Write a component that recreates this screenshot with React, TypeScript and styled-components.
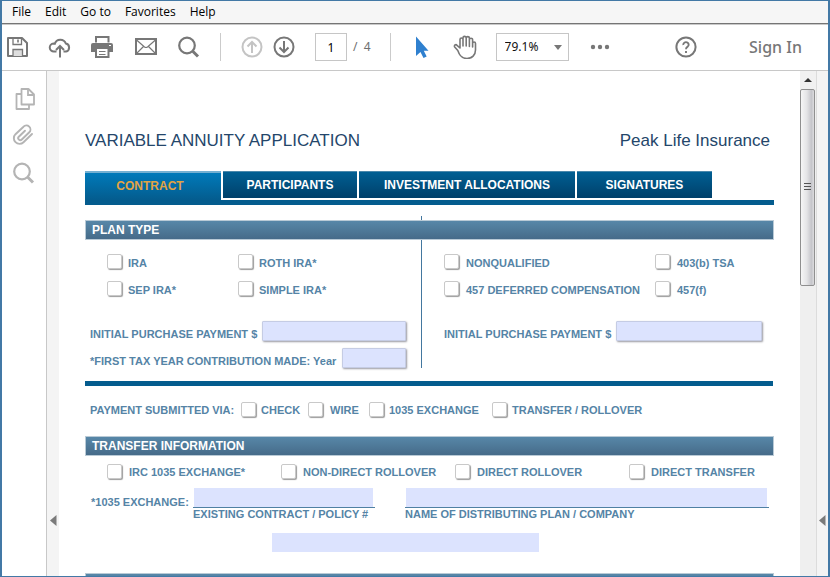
import React, { useState } from "react";
import styled, { createGlobalStyle, css } from "styled-components";

const GlobalStyle = createGlobalStyle`
  *, *::before, *::after { box-sizing: border-box; }
  body { margin: 0; background: #fff; font-family: "Liberation Sans", Arial, sans-serif; }
  button, input, select { font: inherit; color: inherit; margin: 0; }
`;

const uiFont = `"Open Sans", "Noto Sans", sans-serif`;

const Window = styled.div`
  display: flex;
  flex-direction: column;
  height: 100vh;
  overflow: hidden;
  border: solid #4379a6;
  border-width: 1px 2px;
  background: #fff;
`;

const MenuBar = styled.nav`
  display: flex;
  gap: 14px;
  height: 23px;
  flex: none;
  padding-left: 10px;
  background: #f6f6f6;
  border-bottom: 1px solid #757575;
  box-shadow: 0 1px 0 #c9c9c9;
`;

const MenuItem = styled.button`
  border: 0;
  padding: 0 0 1px;
  background: none;
  color: #000;
  font: 12px/20px ${uiFont};
`;

const Toolbar = styled.div`
  display: flex;
  align-items: center;
  gap: 19px;
  height: 47px;
  flex: none;
  padding: 0 26px 0 3px;
  border-bottom: 1px solid #c8c8c8;
  font: 12px/20px "Noto Sans", sans-serif;
  color: #6f6f6f;
`;

const Group = styled.div<{ $gap: number }>`
  display: flex;
  align-items: center;
  gap: ${(p) => p.$gap}px;
`;

const Divider = styled.span`
  width: 1px;
  height: 28px;
  background: #cbcbcb;
`;

const IconButton = styled.button<{ $tone?: string }>`
  display: flex;
  align-items: center;
  justify-content: center;
  width: 24px;
  height: 24px;
  flex: none;
  padding: 0;
  border: 0;
  background: none;
  color: ${(p) => p.$tone ?? "#777"};
`;

const PageInput = styled.input`
  width: 32px;
  height: 28px;
  padding: 0;
  border: 1px solid #c6c6c6;
  background: #fff;
  color: #000;
  text-align: center;
`;

const ZoomBox = styled.div`
  display: grid;
  align-items: center;
  width: 73px;
  height: 28px;
  color: #111;

  & > * { grid-area: 1 / 1; }
  svg { justify-self: end; margin-right: 7px; pointer-events: none; }
`;

const ZoomSelect = styled.select`
  appearance: none;
  width: 100%;
  height: 100%;
  padding: 0 8px;
  border: 1px solid #c6c6c6;
  border-radius: 0;
  background: #fff;
`;

const Account = styled.div`
  display: flex;
  align-items: center;
  gap: 51px;
  margin-left: auto;
`;

const SignIn = styled.button`
  padding: 0;
  border: 0;
  background: none;
  color: #777;
  font: 500 16px/24px "Noto Sans", sans-serif;
`;

const Body = styled.div`
  display: flex;
  flex: 1;
  min-height: 0;
`;

const Rail = styled.aside`
  display: flex;
  flex-direction: column;
  align-items: center;
  gap: 13px;
  width: 45px;
  flex: none;
  padding-top: 16px;
  border-right: 1px solid #c8c8c8;
`;

const Gutter = styled.div<{ $ruled?: boolean }>`
  display: flex;
  align-items: flex-end;
  justify-content: center;
  width: 12px;
  flex: none;
  padding-bottom: 50px;
  background: #f4f4f4;
  ${(p) => p.$ruled && css`border-left: 1px solid #dcdcdc;`}
`;

const GutterButton = styled.button`
  display: flex;
  padding: 0;
  border: 0;
  background: none;
`;

const Scrollbar = styled.div`
  display: flex;
  flex-direction: column;
  width: 16px;
  flex: none;
  background: #efefef;
`;

const ScrollUp = styled.button`
  display: flex;
  align-items: center;
  justify-content: center;
  height: 18px;
  padding: 0;
  border: 0;
  background: #f1f1f1;
`;

const Thumb = styled.div`
  display: flex;
  align-items: center;
  justify-content: center;
  height: 39%;
  margin-right: 1px;
  border: 1px solid #8f8f8f;
  border-radius: 2px;
  background: linear-gradient(90deg, #f6f6f6, #e4e4e6 45%, #c5c5ca 80%, #dcdcde);
`;

const Page = styled.main`
  flex: 1;
  min-width: 0;
  overflow: hidden;
  padding: 60px 26px 0;
  background: #fff;
`;

const Titles = styled.header`
  display: flex;
  justify-content: space-between;
  padding-right: 4px;
  color: #24466a;
  font-size: 17px;
  line-height: 20px;
`;

const Title = styled.h1`
  margin: 0;
  font: inherit;
`;

const Tabs = styled.div`
  display: flex;
  align-items: flex-start;
  gap: 2px;
  height: 34px;
  margin-top: 20px;
  border-bottom: 5px solid #045c8e;
`;

const Tab = styled.button<{ $basis: number; $active?: boolean }>`
  flex: 0 1 ${(p) => p.$basis}px;
  height: 27px;
  padding: 0;
  border: 0;
  border-top: 1px solid #4a88ab;
  background: linear-gradient(#005f93, #00406a);
  color: #fff;
  font-size: 12px;
  line-height: 24px;
  font-weight: bold;
  white-space: nowrap;
  ${(p) =>
    p.$active &&
    css`
      height: 29px;
      padding: 0 6px 2px 0;
      border-top: 2px solid #74b0d2;
      background: linear-gradient(#007aba, #045c8e);
      color: #e2a443;
    `}
`;

const SectionHead = styled.h2`
  position: relative;
  z-index: 1;
  height: 20px;
  margin: 0;
  padding-left: 6px;
  border: 1px solid #b9cad6;
  background: linear-gradient(#5787a8, #466b89);
  color: #fff;
  font-size: 12px;
  line-height: 18px;
`;

const Section = styled.section<{ $top: number }>`
  margin-top: ${(p) => p.$top}px;
  color: #5584a6;
  font-size: 11px;
  line-height: 14px;
  font-weight: bold;
`;

const Columns = styled.div`
  display: grid;
  grid-template-columns: minmax(0, 336fr) minmax(0, 353fr);
`;

const Column = styled.div<{ $ruled?: boolean }>`
  position: relative;
  padding: 9px 15px 0 5px;

  ${(p) =>
    p.$ruled &&
    css`
      padding: 9px 12px 0 23px;
      /* The rule starts just above the section bar and passes beneath it. */
      &::before {
        content: "";
        position: absolute;
        left: 0;
        top: -24px;
        bottom: 4px;
        width: 1px;
        background: #43779f;
      }
    `}
`;

const ChoiceRow = styled.div<{ $columns: string; $height: number; $indent?: number }>`
  display: grid;
  grid-template-columns: ${(p) => p.$columns};
  align-items: center;
  height: ${(p) => p.$height}px;
  padding-left: ${(p) => p.$indent ?? 0}px;
  white-space: nowrap;
`;

const ChoiceLabel = styled.label<{ $gap: number }>`
  display: flex;
  align-items: center;
  gap: ${(p) => p.$gap}px;
`;

const Box = styled.input`
  appearance: none;
  width: 15px;
  height: 15px;
  flex: none;
  margin-bottom: 2px;
  border: 1px solid #c9c9c9;
  border-radius: 2px;
  background: #fff;
  box-shadow: 1px 1px 1px #9c9c9c;

  &:checked { background: #5584a6; }
`;

const FieldRow = styled.div<{ $spaced?: boolean }>`
  display: flex;
  align-items: center;
  justify-content: space-between;
  gap: 5px;
  height: 27px;
  margin-top: ${(p) => (p.$spaced ? 15 : 0)}px;
  white-space: nowrap;

  label { padding-top: 4px; }
`;

const Field = styled.input<{ $width?: number }>`
  height: 20px;
  min-width: 0;
  margin-bottom: 2px;
  ${(p) => (p.$width ? css`width: ${p.$width}px;` : css`flex: 1;`)}
  border: 1px solid #c5cce4;
  border-radius: 1px;
  background: #dce3fe;
  box-shadow: 1px 1px 2px #9a9aa2;
`;

const Rule = styled.hr`
  height: 5px;
  margin: 9px 1px 0 0;
  border: 0;
  background: #045c8e;
`;

const Lines = styled.div`
  display: grid;
  grid-template-columns: 102px minmax(0, 1fr);
  padding: 0 5px 0 6px;
  margin-bottom: 12px;
`;

const LineLabel = styled.span`
  padding-top: 7px;
`;

const LinePair = styled.div`
  display: grid;
  grid-template-columns: minmax(0, 182fr) minmax(0, 364fr);
  column-gap: 30px;
`;

const LineCell = styled.div`
  display: flex;
  flex-direction: column;
`;

const LineInput = styled.input`
  height: 19px;
  min-width: 0;
  margin: 0 2px 0 1px;
  border: 0;
  background: #dce3fe;
`;

const Caption = styled.label`
  border-top: 1px solid #4f80a3;
  line-height: 13px;
  white-space: nowrap;
`;

const SpareLine = styled.div`
  display: grid;
  grid-template-columns: 186fr 270fr 233fr;
  margin-bottom: 21px;

  input { grid-column: 2; }
`;

const Svg = ({ children, sw = 2 }: { children: React.ReactNode; sw?: number }) => (
  <svg width="24" height="24" viewBox="0 0 24 24" fill="none" stroke="currentColor" strokeWidth={sw} aria-hidden="true">
    {children}
  </svg>
);

const SaveIcon = () => (
  <Svg>
    <path d="M3 3h14l5 5v13H3z" strokeLinejoin="round" />
    <path d="M8 3v6.500h8.500V3" strokeWidth="1.300" />
    <path d="M13 4.500v3" strokeWidth="1.600" />
    <path d="M8 21v-6.500h9.500V21" fill="#dedede" strokeWidth="1.300" />
  </Svg>
);
const CloudIcon = () => (
  <Svg>
    <path d="M8.500 16.500H6a4 4 0 0 1-.500-8q.500 0 1.300.200A5.800 5.800 0 0 1 17.800 8.500 4.100 4.100 0 0 1 18 16.500h-2.500" />
    <path d="M12 22.500V11.500M8 15l4-4 4 4" />
  </Svg>
);
const PrintIcon = () => (
  <Svg>
    <path d="M5 7.500V2h12.500v5.500" />
    <path d="M2 8h18a2 2 0 0 1 2 2v7H0v-7a2 2 0 0 1 2-2z" fill="currentColor" stroke="none" />
    <path d="M5 13h12.500v9H5z" fill="#fff" />
    <path d="M8 16.500h6.500M8 19.500h6.500" strokeWidth="1" />
    <path d="M18 10.500h2" stroke="#fff" strokeWidth="1" />
  </Svg>
);
const MailIcon = () => (
  <Svg>
    <path d="M2 4h20v15H2z" />
    <path d="M2 4.500l8.500 7.500q1.500 1 3 0L22 4.500M2.500 18.500l7-7M21.500 18.500l-7-7" strokeWidth="1.200" />
  </Svg>
);
const SearchIcon = () => (
  <Svg sw={2.2}>
    <circle cx="10" cy="10.500" r="7.800" />
    <path d="M15.500 16l5.500 5.500" strokeWidth="3" />
  </Svg>
);
const CircleArrow = ({ down }: { down?: boolean }) => (
  <Svg>
    <circle cx="12" cy="12" r="9.500" />
    {down ? <path d="M12 6v11M7.500 12.500L12 17l4.500-4.500" /> : <path d="M12 18V7M7.500 11.500L12 7l4.500 4.500" />}
  </Svg>
);
const CursorIcon = () => (
  <Svg>
    <path d="M6 1.500v19.500l4.500-4 3 6 3.200-1.500-2.900-5.700H18.500z" fill="currentColor" stroke="none" />
  </Svg>
);
const HandIcon = () => (
  <Svg sw={1.6}>
    <path
      d="M4.800 15.500L1.700 12a1.400 1.400 0 0 1 2.300-1.700L7 13V4.500a1.500 1.500 0 0 1 3 0V11V3a1.500 1.500 0 0 1 3.200 0V11V3.200a1.500 1.500 0 0 1 3.200 0V11.500V4.800a1.500 1.500 0 0 1 3.200 0V12V8.500a1.400 1.400 0 0 1 2.900 0V15c0 5-3.500 8.500-8.500 8.500-5.500 0-7.500-3-9.200-8z"
      strokeLinejoin="round"
    />
  </Svg>
);
const DotsIcon = () => (
  <Svg>
    <g fill="currentColor" stroke="none">
      <circle cx="5" cy="12" r="2.200" />
      <circle cx="12" cy="12" r="2.200" />
      <circle cx="19" cy="12" r="2.200" />
    </g>
  </Svg>
);
const HelpIcon = () => (
  <Svg>
    <circle cx="12" cy="12" r="9.600" />
    <path d="M9.300 10a2.700 2.500 0 1 1 4.400 1.600q-1.700 1-1.700 2.600M12 16v2" strokeWidth="1.900" />
  </Svg>
);
const PagesIcon = () => (
  <Svg sw={1.8}>
    <path d="M9.500 2h7l5.500 5.500v10H9.500z" strokeLinejoin="round" />
    <path d="M16 2.500V8h5.500" />
    <path d="M9 7H4.500v15H17v-4.500" strokeLinejoin="round" />
  </Svg>
);
const ClipIcon = () => (
  <Svg sw={1.9}>
    <path
      d="M20 10l-8.500 8.200a5.600 5.600 0 0 1-8-8l8-7.500a4 4 0 0 1 5.800 5.600l-7.500 7.200a2 2 0 0 1-3-2.800l6.200-6"
      strokeLinecap="round"
    />
  </Svg>
);
const LeftTriangle = () => (
  <svg width="7" height="11" viewBox="0 0 7 11" aria-hidden="true">
    <path d="M6.500 0v11L0 5.500z" fill="#7a7a7a" />
  </svg>
);

const Choice = ({ text, gap = 7 }: { text: string; gap?: number }) => (
  <ChoiceLabel $gap={gap}>
    <Box type="checkbox" />
    {text}
  </ChoiceLabel>
);

const menus = ["File", "Edit", "Go to", "Favorites", "Help"];
const tabs = [
  { text: "CONTRACT", basis: 136 },
  { text: "PARTICIPANTS", basis: 134 },
  { text: "INVESTMENT ALLOCATIONS", basis: 216 },
  { text: "SIGNATURES", basis: 135 },
];

export default function App() {
  const [active, setActive] = useState("CONTRACT");

  return (
    <>
      <GlobalStyle />
      <Window>
        <MenuBar>
          {menus.map((m) => (
            <MenuItem key={m}>{m}</MenuItem>
          ))}
        </MenuBar>
        <Toolbar>
          <IconButton aria-label="Save"><SaveIcon /></IconButton>
          <IconButton aria-label="Upload"><CloudIcon /></IconButton>
          <IconButton aria-label="Print"><PrintIcon /></IconButton>
          <IconButton aria-label="Email"><MailIcon /></IconButton>
          <IconButton aria-label="Find"><SearchIcon /></IconButton>
          <Divider />
          <Group $gap={8}>
            <IconButton aria-label="Previous page" $tone="#c4c4c4"><CircleArrow /></IconButton>
            <IconButton aria-label="Next page"><CircleArrow down /></IconButton>
          </Group>
          <Group $gap={6}>
            <PageInput aria-label="Page number" defaultValue="1" />
            <span>/&nbsp; 4</span>
          </Group>
          <Divider />
          <IconButton aria-label="Select" $tone="#2f80cf"><CursorIcon /></IconButton>
          <IconButton aria-label="Pan"><HandIcon /></IconButton>
          <ZoomBox>
            <ZoomSelect aria-label="Zoom level" defaultValue="79.1%">
              <option>79.1%</option>
              <option>100%</option>
            </ZoomSelect>
            <svg width="8" height="5" viewBox="0 0 8 5" aria-hidden="true">
              <path d="M0 0h8L4 5z" fill="#777" />
            </svg>
          </ZoomBox>
          <IconButton aria-label="More tools"><DotsIcon /></IconButton>
          <Account>
            <IconButton aria-label="Help"><HelpIcon /></IconButton>
            <SignIn>Sign In</SignIn>
          </Account>
        </Toolbar>
        <Body>
          <Rail>
            <IconButton aria-label="Page thumbnails" $tone="#b4b4b4"><PagesIcon /></IconButton>
            <IconButton aria-label="Attachments" $tone="#b4b4b4"><ClipIcon /></IconButton>
            <IconButton aria-label="Search document" $tone="#b4b4b4"><SearchIcon /></IconButton>
          </Rail>
          <Gutter>
            <GutterButton aria-label="Collapse left panel"><LeftTriangle /></GutterButton>
          </Gutter>
          <Page>
            <Titles>
              <Title>VARIABLE ANNUITY APPLICATION</Title>
              <span>Peak Life Insurance</span>
            </Titles>
            <Tabs role="tablist">
              {tabs.map((t) => (
                <Tab
                  key={t.text}
                  role="tab"
                  aria-selected={active === t.text}
                  $active={active === t.text}
                  $basis={t.basis}
                  onClick={() => setActive(t.text)}
                >
                  {t.text}
                </Tab>
              ))}
            </Tabs>

            <Section $top={15}>
              <SectionHead>PLAN TYPE</SectionHead>
              <Columns>
                <Column>
                  <ChoiceRow $columns="131px 1fr" $height={27} $indent={17}>
                    <Choice text="IRA" gap={6} />
                    <Choice text="ROTH IRA*" gap={6} />
                  </ChoiceRow>
                  <ChoiceRow $columns="131px 1fr" $height={27} $indent={17}>
                    <Choice text="SEP IRA*" gap={6} />
                    <Choice text="SIMPLE IRA*" gap={6} />
                  </ChoiceRow>
                  <FieldRow $spaced>
                    <label htmlFor="initial-ira">INITIAL PURCHASE PAYMENT $</label>
                    <Field id="initial-ira" />
                  </FieldRow>
                  <FieldRow>
                    <label htmlFor="tax-year">*FIRST TAX YEAR CONTRIBUTION MADE: Year</label>
                    <Field id="tax-year" $width={64} />
                  </FieldRow>
                </Column>
                <Column $ruled>
                  <ChoiceRow $columns="211px 1fr" $height={27}>
                    <Choice text="NONQUALIFIED" />
                    <Choice text="403(b) TSA" />
                  </ChoiceRow>
                  <ChoiceRow $columns="211px 1fr" $height={27}>
                    <Choice text="457 DEFERRED COMPENSATION" />
                    <Choice text="457(f)" />
                  </ChoiceRow>
                  <FieldRow $spaced>
                    <label htmlFor="initial-other">INITIAL PURCHASE PAYMENT $</label>
                    <Field id="initial-other" />
                  </FieldRow>
                </Column>
              </Columns>
              <Rule />
              <ChoiceRow $columns="151px 67px 61px 123px 1fr" $height={48} $indent={5}>
                <span>PAYMENT SUBMITTED VIA:</span>
                <Choice text="CHECK" gap={5} />
                <Choice text="WIRE" />
                <Choice text="1035 EXCHANGE" gap={5} />
                <Choice text="TRANSFER / ROLLOVER" gap={5} />
              </ChoiceRow>
            </Section>

            <Section $top={2}>
              <SectionHead>TRANSFER INFORMATION</SectionHead>
              <ChoiceRow $columns="174px 174px 174px 1fr" $height={32} $indent={22}>
                <Choice text="IRC 1035 EXCHANGE*" />
                <Choice text="NON-DIRECT ROLLOVER" />
                <Choice text="DIRECT ROLLOVER" />
                <Choice text="DIRECT TRANSFER" />
              </ChoiceRow>
              <Lines>
                <LineLabel>*1035 EXCHANGE:</LineLabel>
                <LinePair>
                  <LineCell>
                    <LineInput id="policy" />
                    <Caption htmlFor="policy">EXISTING CONTRACT / POLICY #</Caption>
                  </LineCell>
                  <LineCell>
                    <LineInput id="plan-name" />
                    <Caption htmlFor="plan-name">NAME OF DISTRIBUTING PLAN / COMPANY</Caption>
                  </LineCell>
                </LinePair>
              </Lines>
              <SpareLine>
                <LineInput aria-label="Distributing company, continued" />
              </SpareLine>
            </Section>
            <Section $top={0}>
              <SectionHead />
            </Section>
          </Page>
          <Scrollbar>
            <ScrollUp aria-label="Scroll up">
              <svg width="8" height="4" viewBox="0 0 8 4" aria-hidden="true">
                <path d="M0 4h8L4 0z" fill="#333" />
              </svg>
            </ScrollUp>
            <Thumb>
              <svg width="7" height="8" viewBox="0 0 7 8" stroke="#555" aria-hidden="true">
                <path d="M0 .5h7M0 3.500h7M0 6.500h7" />
              </svg>
            </Thumb>
          </Scrollbar>
          <Gutter $ruled>
            <GutterButton aria-label="Expand right panel"><LeftTriangle /></GutterButton>
          </Gutter>
        </Body>
      </Window>
    </>
  );
}
